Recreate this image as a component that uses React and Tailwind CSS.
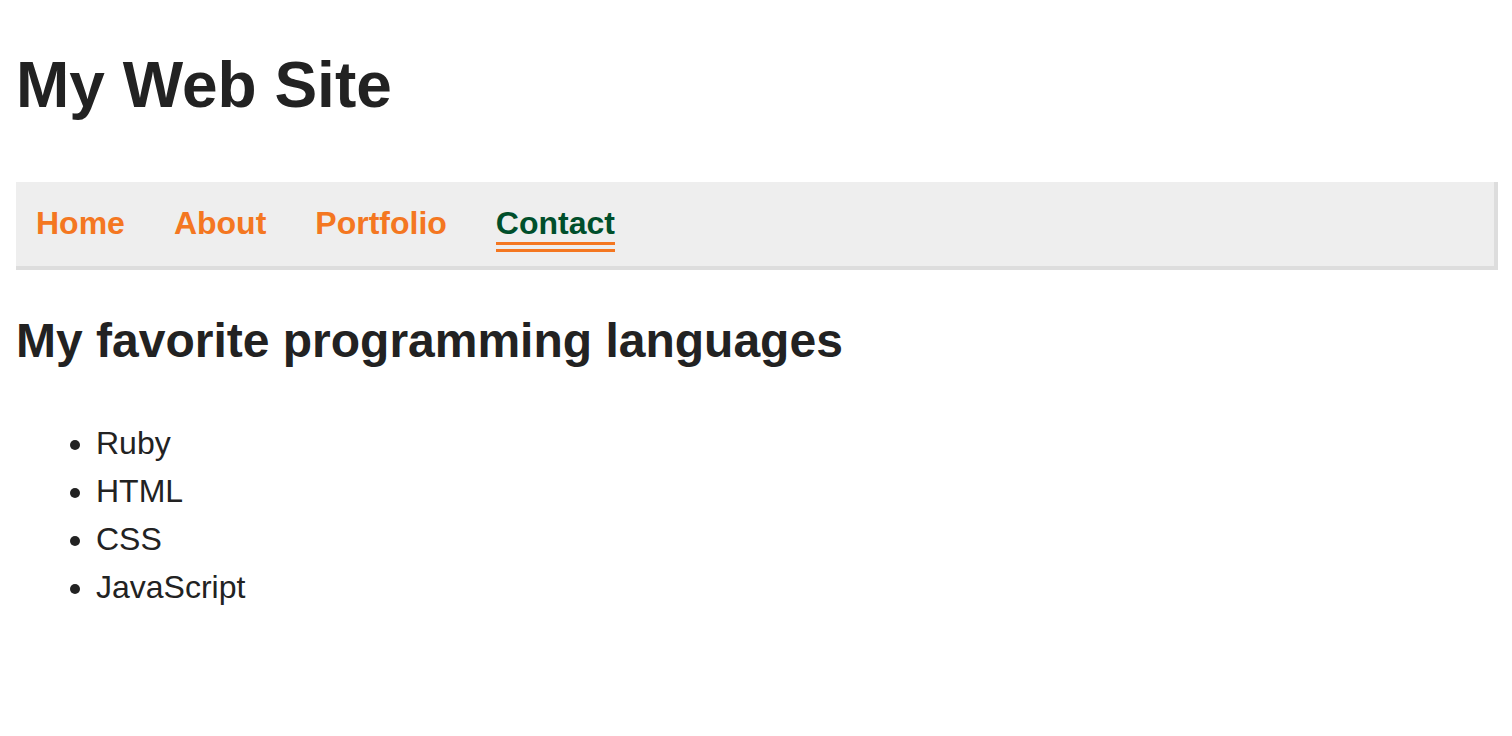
const links = [
  { label: "Home" },
  { label: "About" },
  { label: "Portfolio" },
  { label: "Contact", active: true },
];

const languages = ["Ruby", "HTML", "CSS", "JavaScript"];

export default function App() {
  return (
    <div className="min-h-[736px] bg-white text-[#222] font-['Liberation_Sans',Arial,sans-serif] pl-4 pr-[14px] pt-[53px]">

      <h1 className="text-[64px] font-bold leading-none">
        My Web Site
      </h1>

      <nav className="mt-[65px] bg-[#eee] border-r-4 border-b-4 border-[#ddd] pl-5 pt-[23px] pb-[14px]">
        <ul className="flex gap-[49px]">
          {links.map((link) => (
            <li key={link.label}>
              <a
                href="#"
                className={
                  link.active
                    ? "block text-[32px] font-bold leading-[37px] text-[#004f2b] border-b-[10px] border-double border-[#f47721]"
                    : "block text-[32px] font-bold leading-[37px] text-[#f47721] border-b-[10px] border-double border-transparent"
                }
              >
                {link.label}
              </a>
            </li>
          ))}
        </ul>
      </nav>

      <h2 className="mt-[47px] text-[48px] font-bold leading-none">
        My favorite programming languages
      </h2>

      <ul className="mt-[54px] list-disc pl-20 text-[32px] leading-[48px]">
        {languages.map((lang) => (
          <li key={lang}>{lang}</li>
        ))}
      </ul>

    </div>
  );
}
